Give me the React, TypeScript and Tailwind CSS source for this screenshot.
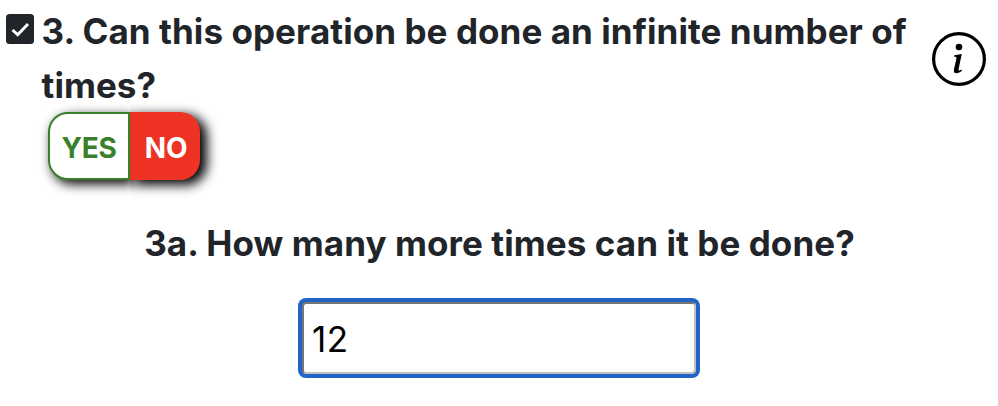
export default function App() {
  return (
    <main className="h-[406px] w-[998px] overflow-hidden bg-white font-['Inter','Liberation_Sans',sans-serif] text-[#212529]">
      <section className="flex pl-1.5 pt-1">
        <svg className="mt-2.5 h-[30px] w-7 shrink-0" viewBox="0 0 28 30" aria-label="Completed">
          <rect width="28" height="30" rx="3.5" fill="#212529" />
          <path d="M6.5 16 L11.7 20.7 L22 10" fill="none" stroke="#fff" strokeWidth="3" />
        </svg>
        <div className="ml-[7px] w-[872px] shrink-0">
          <h2 className="whitespace-nowrap pl-[0.5px] text-[35px] font-bold leading-[54px] tracking-[0.07px]">
            3. Can this operation be done an infinite number of
            <br />
            times?
          </h2>
          <div className="ml-[7px] flex h-[68px] w-[152px] text-[28px] font-bold leading-none">
            <button className="w-[82px] rounded-l-[20px] border-2 border-[#38802a] bg-white px-1.5 pt-1 tracking-[-0.2px] text-[#38802a] shadow-[4px_4px_12px_#000]">
              YES
            </button>
            <button className="relative w-[70px] rounded-r-[20px] bg-[#ee3224] pl-0.5 pt-1 tracking-[-0.2px] text-white shadow-[6px_4px_12px_1px_#000] [clip-path:inset(-20px_-24px_-24px_0)]">
              NO
            </button>
          </div>
        </div>
        <svg className="ml-[19px] mt-[28px] h-[54px] w-[54px] shrink-0" viewBox="0 0 54 54" aria-label="Information">
          <circle cx="27" cy="27" r="25.4" fill="none" stroke="#000" strokeWidth="3.2" />
          <circle cx="27" cy="15" r="3.3" fill="#000" />
          <path d="M22.3 23.2 L29.8 22.1 L26.6 37 C26.3 38.8 27.4 38.8 29.6 37.5 L30 38.8 C27 41.3 21.6 42.7 21.9 38.4 C22 35.8 23.9 30 24.4 26.5 C24.6 25 24 24.7 22.1 24.7 Z" fill="#000" />
        </svg>
      </section>
      <section className="flex flex-col items-center pt-9">
        <h3 className="whitespace-nowrap pl-px text-[35px] font-bold leading-[54px] tracking-[0.08px]">
          3a. How many more times can it be done?
        </h3>
        <input
          className="mt-8 h-[72px] w-[394px] rounded-[4px] border-2 border-b-[#c0c0c0] border-l-[#767676] border-r-[#c0c0c0] border-t-[#767676] bg-white px-2 pt-0.5 text-[35px] leading-none tracking-[0.5px] text-black shadow-[0_0_0_4px_#2163c7] outline-none"
          defaultValue="12"
          aria-label="How many more times"
        />
      </section>
    </main>
  );
}
